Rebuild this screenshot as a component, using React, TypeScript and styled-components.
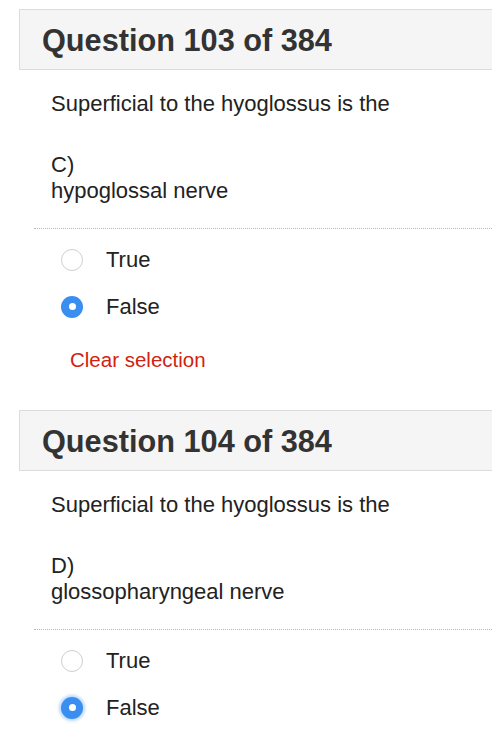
import React from "react";
import styled, { createGlobalStyle } from "styled-components";

const GlobalStyle = createGlobalStyle`
  body {
    margin: 0;
    background: #ffffff;
    font-family: "Liberation Sans", Arial, Helvetica, sans-serif;
    overflow: hidden;
  }
`;

const Page = styled.div`
  padding: 9px 0 0 19px;
`;

const Block = styled.section`
  margin-bottom: 38px;
`;

const Header = styled.div`
  height: 61px;
  box-sizing: border-box;
  display: flex;
  align-items: center;
  padding: 3px 0 0 22px;
  background: #f5f5f5;
  border: 1px solid #dcdcdc;
  border-right: none;
`;

const Title = styled.h2`
  margin: 0;
  font-size: 30.7px;
  font-weight: 700;
  color: #333333;
`;

const Text = styled.p<{ $gap: number }>`
  margin: ${(p) => p.$gap}px 0 0 32px;
  font-size: 22px;
  line-height: 26px;
  color: #222222;
`;

const Divider = styled.div`
  margin: 24px 0 0 15px;
  border-top: 1px dotted #b8b8b8;
`;

const Options = styled.div`
  padding-top: 7px;
  display: flex;
  flex-direction: column;
`;

const Option = styled.label`
  height: 47px;
  display: flex;
  align-items: center;
  padding-left: 42px;
  gap: 23px;
  font-size: 22px;
  color: #222222;
`;

const Radio = styled.span<{ $checked: boolean; $focus?: boolean }>`
  width: 22px;
  height: 22px;
  box-sizing: border-box;
  border-radius: 50%;
  display: flex;
  align-items: center;
  justify-content: center;
  background: ${(p) => (p.$checked ? "#3a8ef0" : "#ffffff")};
  border: ${(p) => (p.$checked ? "none" : "1.5px solid #cfcfcf")};
  box-shadow: ${(p) => (p.$focus ? "0 0 3px 2px rgba(58, 142, 240, 0.35)" : "none")};

  &::after {
    content: "";
    display: ${(p) => (p.$checked ? "block" : "none")};
    width: 7px;
    height: 7px;
    border-radius: 50%;
    background: #ffffff;
  }
`;

const Clear = styled.div`
  margin: 18px 0 0 51px;
  font-size: 20.5px;
  line-height: 24px;
  color: #d0220f;
`;

type Q = { num: number; letter: string; answer: string; focus?: boolean };

const questions: Q[] = [
  { num: 103, letter: "C)", answer: "hypoglossal nerve" },
  { num: 104, letter: "D)", answer: "glossopharyngeal nerve", focus: true },
];

export default function App() {
  return (
    <>
      <GlobalStyle />
      <Page>
        {questions.map((q) => (
          <Block key={q.num}>
            <Header>
              <Title>Question {q.num} of 384</Title>
            </Header>
            <Text $gap={21}>Superficial to the hyoglossus is the</Text>
            <Text $gap={35}>
              {q.letter}
              <br />
              {q.answer}
            </Text>
            <Divider />
            <Options>
              <Option>
                <Radio $checked={false} />
                True
              </Option>
              <Option>
                <Radio $checked={true} $focus={q.focus} />
                False
              </Option>
            </Options>
            <Clear>Clear selection</Clear>
          </Block>
        ))}
      </Page>
    </>
  );
}
